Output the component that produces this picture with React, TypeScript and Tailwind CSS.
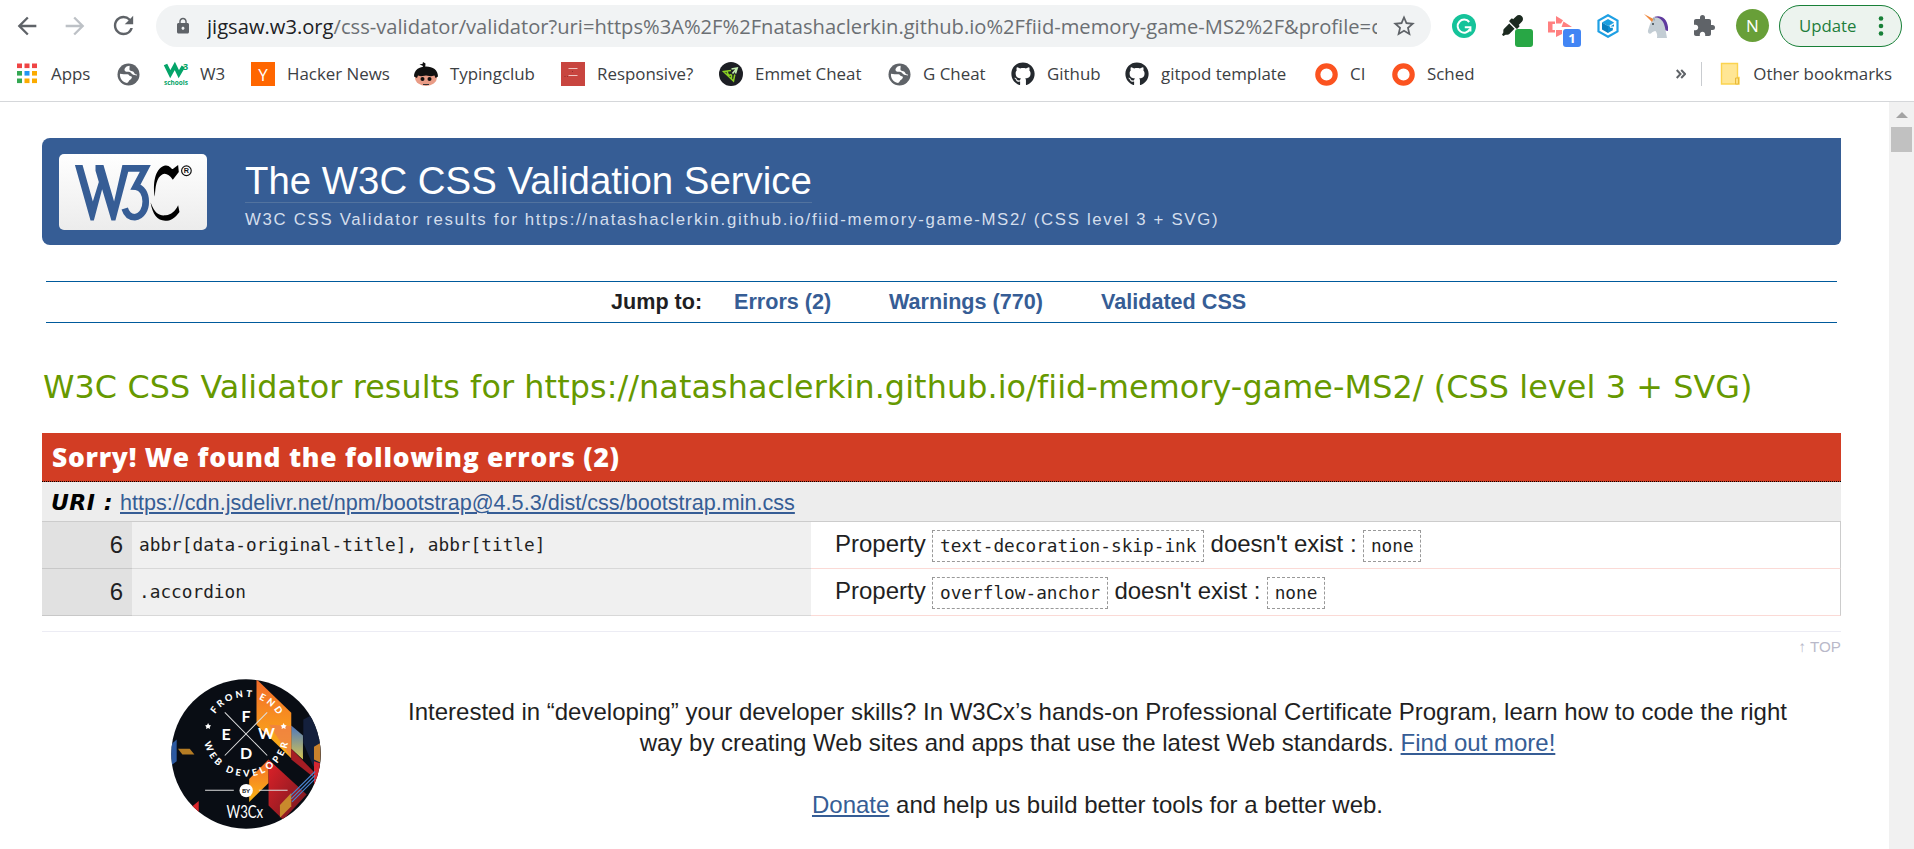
import type { ReactNode } from 'react';
import { FaEyeDropper, FaGithub } from 'react-icons/fa';
import { MdArrowBack, MdArrowForward, MdExtension, MdLock, MdRefresh, MdStarBorder } from 'react-icons/md';

function AppsIcon() {
  const colors = ['#ef4444', '#ef4444', '#ef4444', '#34a853', '#2196f3', '#fbab00', '#34a853', '#fbab00', '#fbab00'];
  return (
    <svg viewBox="0 0 24 24" className="size-6">
      {colors.map((c, i) => (
        <rect key={i} x={2 + (i % 3) * 7.5} y={1.5 + Math.floor(i / 3) * 7.5} width="5" height="4.6" fill={c} />
      ))}
    </svg>
  );
}

function GlobeIcon() {
  return (
    <svg viewBox="0 0 24 24" className="size-6">
      <circle cx="12.5" cy="12.5" r="11" fill="#5f6368" />
      <path d="M4 11.800C7 12.500 9 12 11.500 12.200 13 12.300 13 14 15 14.300 16.500 14.600 16 16.500 14.500 17.500 12.500 18.500 13 20 11 21 6 20 3.500 16 4 11.800Z" fill="#fff" />
      <path d="M13.500 3.800C10 4 9.500 5.500 8.500 7.200 8 9 10 10 12.500 9.800 14.500 9.800 15 11 16 12 17.500 13.300 19.500 13 21 13.500 21.300 9 18.500 4.500 13.500 3.800Z" fill="#fff" />
      <path d="M13.500 2.500C19 3 22.500 8 22.300 13 19.500 12.500 18.500 12 18 10.500 17.500 9 15.500 9.500 14 8.500 12.800 7.300 14 6.500 13.500 2.500Z" fill="#5f6368" />
    </svg>
  );
}

function SchoolsIcon() {
  return (
    <svg viewBox="0 0 24 24" className="size-6 overflow-visible">
      <path d="M1.5 2.5 6.3 12.2 10.8 4 14.8 12.2 19.3 4.5" fill="none" stroke="#04a469" strokeWidth="3.8" />
      <text x="19" y="7.5" fontSize="9" fontWeight="700" fill="#04a469" className="font-['Open_Sans']">3</text>
      <text x="0" y="23" fontSize="7" fontWeight="700" fill="#04a469" textLength="24" lengthAdjust="spacingAndGlyphs" className="font-['Open_Sans']">schools</text>
    </svg>
  );
}

function TypingIcon() {
  return (
    <svg viewBox="0 0 24 24" className="size-6">
      <path d="M8.500 6 9 4 5.500 2.200 8.500 2 9 0l2.500 1.500-.3 4Z" fill="#111" />
      <ellipse cx="12" cy="15.5" rx="11" ry="8.5" fill="#e99c86" />
      <path d="M0 14.500C0 8 5 4.500 12 4.500S24 8 24 14.500l-2.500 1.500-1-2.500-3.500.8-5-.8-5 .8-3-.8-1 2.500Z" fill="#111" />
      <circle cx="8.5" cy="17" r="2" fill="#111" />
      <circle cx="15.5" cy="17" r="2" fill="#111" />
      <path d="M9 22.5h6" stroke="#333" strokeWidth="1" />
    </svg>
  );
}

function ResponsiveIcon() {
  return (
    <svg viewBox="0 0 24 24" className="size-6">
      <rect width="24" height="24" fill="#c8453f" />
      <path d="M7.5 6.5h9M7.5 13.5h9" stroke="#f0c4c0" strokeWidth="1.2" />
      <path d="M3.5 14.5h1M6 14.5h.8M11 9.5h1" stroke="#8e2f2b" strokeWidth="1" />
    </svg>
  );
}

function EmmetIcon() {
  return (
    <svg viewBox="0 0 24 24" className="size-6">
      <circle cx="12" cy="12" r="12" fill="#1d1f24" />
      <path d="M12 8.5 4.5 9.5 14.5 19 15.8 12.5M8 9.2l1.5 4.3 3-1M12.5 12.5v4" fill="none" stroke="#8bd124" strokeWidth="1.5" />
      <path d="M12.5 7 18.2 6 16.5 11.5M17.5 6.8 13.5 11.5" fill="none" stroke="#c5efb0" strokeWidth="1.6" />
    </svg>
  );
}

function RingIcon() {
  return (
    <svg viewBox="0 0 24 24" className="size-6">
      <circle cx="12.5" cy="12.5" r="8.7" fill="none" stroke="#fb5320" strokeWidth="5.2" />
    </svg>
  );
}

function YIcon() {
  return (
    <span className="flex size-6 items-center justify-center bg-[#ff6600] font-['Open_Sans',sans-serif] text-[17px] leading-none text-white">Y</span>
  );
}

const bookmarks: { icon: ReactNode; label: string; width: string }[] = [
  { icon: <AppsIcon />, label: 'Apps', width: 'w-[101px]' },
  { icon: <GlobeIcon />, label: '', width: 'w-12' },
  { icon: <SchoolsIcon />, label: 'W3', width: 'w-[87px]' },
  { icon: <YIcon />, label: 'Hacker News', width: 'w-[163px]' },
  { icon: <TypingIcon />, label: 'Typingclub', width: 'w-[147px]' },
  { icon: <ResponsiveIcon />, label: 'Responsive?', width: 'w-[158px]' },
  { icon: <EmmetIcon />, label: 'Emmet Cheat', width: 'w-[168px]' },
  { icon: <GlobeIcon />, label: 'G Cheat', width: 'w-[124px]' },
  { icon: <FaGithub className="size-6 text-[#24292e]" />, label: 'Github', width: 'w-[114px]' },
  { icon: <FaGithub className="size-6 text-[#24292e]" />, label: 'gitpod template', width: 'w-[189px]' },
  { icon: <RingIcon />, label: 'CI', width: 'w-[77px]' },
  { icon: <RingIcon />, label: 'Sched', width: 'w-[100px]' },
];

function GrammarlyIcon() {
  return (
    <svg viewBox="0 0 24 24" className="size-6">
      <circle cx="12" cy="12" r="12" fill="#15c39a" />
      <path d="M17.2 8A6.5 6.5 0 1 0 18 15" fill="none" stroke="#fff" strokeWidth="2" />
      <path d="M12.8 13.3h5.6v4.2" fill="none" stroke="#fff" strokeWidth="2" />
    </svg>
  );
}

function HexIcon() {
  return (
    <svg viewBox="0 0 24 24" className="size-6">
      <path d="M12 1.2 21.5 6.6V17.4L12 22.8 2.5 17.4V6.6Z" fill="#fff" stroke="#1fa0e4" strokeWidth="2.2" />
      <path d="M12 5 18 8.500 12 12 6 8.500Z" fill="#1b9fe0" />
      <path d="M6 8.500 12 12V19L6 15.500Z" fill="#0a7fbf" />
      <path d="M12 12 18 8.500V15.500L12 19Z" fill="#0f8fd2" />
      <path d="M19 9 13.500 12.200M14 13.200h3.500v3" fill="none" stroke="#fff" strokeWidth="1.3" />
    </svg>
  );
}

function UnicornIcon() {
  return (
    <svg viewBox="0 0 24 24" className="size-6">
      <path d="M10 3C17 0 25 5 24 17l-4-1L15 6Z" fill="#5f3a9e" />
      <path d="M9 4.5C13 2 18 5 20 10c1.500 4 2 9 3 14H13c.5-3 0-5-1.500-7-1.500 0-3.500 1-4.500 2.500-2 .5-3.500-.5-3-3C5 13 6.500 8 9 4.500Z" fill="#c3cdd4" />
      <path d="M0 0 9.5 5 8 8Z" fill="#f0883c" />
      <path d="M9.5 3.5 10.5 6.5" stroke="#9aa7b0" strokeWidth="1.5" />
      <circle cx="9" cy="10" r="1" fill="#38444c" />
    </svg>
  );
}

function CaptureIcon() {
  return (
    <svg viewBox="0 0 24 24" className="size-6" fill="#ff8080">
      <path d="M0 5.500h7v2.500H4.500v6H7v2.500H0Z" />
      <path d="M8 0 15 4.200 13 7.500H8Z" />
      <path d="M15.500 5.500 24 11H13.500Z" />
      <path d="M8 14h6v4l-6 3Z" />
    </svg>
  );
}

function Toolbar() {
  return (
    <div className="flex h-[51px] items-start font-['Open_Sans','Segoe_UI',sans-serif]">
      <div className="flex w-[156px] shrink-0 items-center gap-[20px] pl-[13px] pt-[11px] text-[#5f6368]">
        <MdArrowBack className="size-7" />
        <MdArrowForward className="size-7 text-[#bdc1c6]" />
        <MdRefresh className="size-[29px]" />
      </div>
      <div className="mt-[5px] flex h-[42px] w-[1275px] shrink-0 items-center rounded-full bg-[#f1f3f4]">
        <MdLock className="ml-[18px] size-[18px] shrink-0 text-[#5f6368]" />
        <div className="ml-[15px] w-[1170px] overflow-hidden whitespace-nowrap text-[20.15px] leading-[38px] text-[#6b6f73]">
          <span className="text-[#202124]">jigsaw.w3.org</span>
          <span>/css-validator/validator?uri=https%3A%2F%2Fnatashaclerkin.github.io%2Ffiid-memory-game-MS2%2F&amp;profile=c</span>
        </div>
        <MdStarBorder className="ml-[14px] size-[26px] text-[#5f6368]" />
      </div>
      <div className="flex shrink-0 gap-6 pl-[21px] pt-[14px]">
        <GrammarlyIcon />
        <span className="relative size-6 pl-[2px] pt-px">
          <FaEyeDropper className="size-[21px] text-[#1c2a20]" />
          <span className="absolute left-[15px] top-[15px] size-[18px] rounded-[3px] bg-[#28a745]" />
        </span>
        <span className="relative size-6 pt-[2px]">
          <CaptureIcon />
          <span className="absolute left-[15px] top-[15px] flex size-[18px] items-center justify-center rounded-[3px] bg-[#4285f4] text-[13px] font-bold leading-none text-white">1</span>
        </span>
        <HexIcon />
        <UnicornIcon />
        <MdExtension className="size-6 text-[#5f6368]" />
      </div>
      <div className="ml-5 mt-[9px] flex size-[33px] shrink-0 items-center justify-center rounded-full bg-[#689f38] text-[17px] leading-none text-white">N</div>
      <div className="ml-[10px] mt-[5px] flex h-[42px] w-[123px] shrink-0 items-center rounded-full border border-[#188038] bg-[#ecf3ee] pl-[19px] text-[16.8px] text-[#1e7e3c]">
        <span className="-mt-px">Update</span>
        <svg viewBox="0 0 6 20" className="ml-[21px] h-5 w-[6px]" fill="#188038">
          <circle cx="3" cy="2.5" r="2.3" />
          <circle cx="3" cy="10" r="2.3" />
          <circle cx="3" cy="17.5" r="2.3" />
        </svg>
      </div>
    </div>
  );
}

function BookmarksBar() {
  return (
    <div className="flex h-[51px] items-start border-b border-[#d5d7da] pl-[15px] pt-[11px] font-['Open_Sans','Segoe_UI',sans-serif] text-[16.9px] text-[#3c4043]">
      {bookmarks.map((b, i) => (
        <div key={i} className={`flex h-6 shrink-0 items-center gap-3 ${b.width}`}>
          <span className="shrink-0">{b.icon}</span>
          <span className="-mt-px whitespace-nowrap">{b.label}</span>
        </div>
      ))}
      <div className="flex h-6 flex-1 items-center justify-end">
        <svg viewBox="0 0 10 10" className="mr-[15px] size-[10px]" fill="none" stroke="#5f6368" strokeWidth="2">
          <path d="M.7 1 4.500 5 .7 9M5.200 1 9 5 5.200 9" />
        </svg>
        <div className="h-6 w-px bg-[#c9ccd0]" />
        <svg viewBox="0 0 20 24" className="ml-[18px] h-6 w-5">
          <path d="M1.5 1.500h16v14h1.500v6.500h-17.500Z" fill="#ffe694" stroke="#fbd34f" strokeWidth="1.4" />
          <path d="M15.5 22v-6h3v6Z" fill="#ffe082" stroke="#e8b93a" strokeWidth="1" />
        </svg>
        <span className="-mt-px ml-[13px] mr-[22px] whitespace-nowrap">Other bookmarks</span>
      </div>
    </div>
  );
}

function W3CLogo() {
  return (
    <div className="ml-[17px] mt-4 h-[76px] w-[148px] shrink-0 rounded-[5px] bg-linear-to-b from-white to-[#ececec]">
      <svg viewBox="14 12 446 228" className="h-[76px] w-[148px]">
        <path d="M62 45H85L116 155 134 96 124 62V45H148L180 155 205 45H228L184 212H172L144 118 119 212H109Z" fill="#365d95" />
        <path d="M210 55H274L245 110C284 112 288 196 242 202Q220 202 212 176" fill="none" stroke="#365d95" strokeWidth="20" />
        <path d="M303 140C296 105 302 56 331 47 348 43 352 58 357 57L373 45 375 66 357 89C346 74 336 68 325 73 308 82 304 110 303 140Z" fill="#000" />
        <path d="M290 158C304 196 320 198 336 196 352 195 364 184 373 166L377 186C364 204 350 213 334 213 310 212 296 194 290 158Z" fill="#000" />
        <circle cx="398" cy="62" r="14.5" fill="none" stroke="#111" strokeWidth="3.5" />
        <text x="398" y="70" fontSize="22" fontWeight="700" textAnchor="middle" fill="#111">R</text>
      </svg>
    </div>
  );
}

function Code({ children }: { children: string }) {
  return (
    <code className="ml-[6.500px] mr-[6.300px] mt-2 h-8 border border-dashed border-[#999] px-[6.800px] font-['DejaVu_Sans_Mono',monospace] text-[17.75px] leading-[31px]">
      {children}
    </code>
  );
}

function ErrorRow({ line, selector, property }: { line: string; selector: string; property: string }) {
  return (
    <div className="flex h-[47px]">
      <div className="w-[90px] border-b border-[#c8c8c8] bg-[#e1e1e1] pr-[9px] text-right leading-[46px]">{line}</div>
      <div className="w-[679px] border-b border-[#d8d8d8] bg-[#f0f0f0] pl-[7px] font-['DejaVu_Sans_Mono',monospace] text-[17.78px] leading-[46px]">
        {selector}
      </div>
      <div className="flex flex-1 border-b border-r border-b-[#fbdad6] border-r-[#ccc] pl-6 leading-[44px]">
        <span>Property</span>
        <Code>{property}</Code>
        <span>doesn't exist :</span>
        <Code>none</Code>
      </div>
    </div>
  );
}

function CourseBadge() {
  return (
    <svg viewBox="64 60 449 447" className="ml-[129px] size-[150px] shrink-0" fill="#fff">
      <defs>
        <clipPath id="disc"><circle cx="288.5" cy="283.5" r="223.5" /></clipPath>
        <linearGradient id="amber" x1="0" x2="0" y1="0" y2="1"><stop offset="0" stopColor="#f36a2a" /><stop offset="1" stopColor="#fbb615" /></linearGradient>
        <linearGradient id="steel" x1="0" x2="0" y1="0" y2="1"><stop offset="0" stopColor="#4a76c0" /><stop offset="1" stopColor="#d8c750" /></linearGradient>
        <linearGradient id="crimson" x1="0" x2="1" y1="0" y2="1"><stop offset="0" stopColor="#e02128" /><stop offset="1" stopColor="#6d1820" /></linearGradient>
        <path id="upper" d="M179 223a110 110 0 0 1 220 0" />
        <path id="lower" d="M161 210V223a128 128 0 0 0 256 0V210" />
      </defs>
      <g clipPath="url(#disc)">
        <rect x="60" y="56" width="460" height="460" fill="#090d14" />
        <path d="M460 180 520 150V330L490 320 460 250Z" fill="#14203c" />
        <path d="M424 198 459 228V300L424 268Z" fill="url(#steel)" />
        <path d="M320 60 424 160V296L320 196Z" fill="url(#amber)" />
        <path d="M358 196 424 200V296Z" fill="#ee7d4c" opacity=".7" />
        <path d="M424 268 490 335V352L424 300Z" fill="#a51d24" />
        <path d="M298 358 356 300V370L298 427Z" fill="url(#amber)" />
        <path d="M356 300 470 405 400 480 356 438Z" fill="url(#crimson)" />
        <path d="M390 436 424 400V440L390 474Z" fill="#c98a2c" />
        <path d="M492 262 512 250V310L492 300Z" fill="#c9812c" />
        <path d="M492 305 512 312V360L492 380Z" fill="#d32731" />
        <path d="M422 408 495 336M424 418 495 347M426 427 495 358" stroke="#4a84cf" strokeWidth="3.5" />
        <path d="M64 255 81 240V305L64 318Z" fill="#2c59a0" />
        <path d="M85 268H120L134 285H98Z" fill="#b57c24" />
        <path d="M128 440 147 424V470L128 455Z" fill="#d9262c" />
      </g>
      <path d="M225 159 352 288M352 159 225 288" stroke="#ddd" strokeWidth="3" />
      <g className="font-['Lato',sans-serif]" fontWeight="700">
        <g fontSize="48" textAnchor="middle">
          <text x="289" y="188">F</text>
          <text x="229" y="241">E</text>
          <text x="350" y="240">W</text>
          <text x="289" y="299">D</text>
        </g>
        <g fontSize="28" fontWeight="900">
          <text textAnchor="middle" letterSpacing="8"><textPath href="#upper" startOffset="51.5%">FRONT END</textPath></text>
          <text textAnchor="middle" letterSpacing="9.5"><textPath href="#lower" startOffset="51%">WEB DEVELOPER</textPath></text>
        </g>
        <path d="M175 191 178 197 184 198 180 203 181 209 175 206 169 209 170 203 166 198 172 197ZM401 191 404 197 410 198 406 203 407 209 401 206 395 209 396 203 392 198 398 197Z" />
        <path d="M166 392H252M327 392H413" stroke="#ddd" strokeWidth="3" />
        <circle cx="289" cy="393" r="20" />
        <text x="289" y="400" fontSize="19" fill="#111" textAnchor="middle">BY</text>
        <text x="230" y="476" fontSize="54" fontWeight="400" textLength="110" lengthAdjust="spacingAndGlyphs">W3Cx</text>
      </g>
    </svg>
  );
}

function Page() {
  return (
    <main className="w-[1889px] shrink-0 overflow-hidden pl-[42px] pr-12 pt-9 font-['Liberation_Sans',Arial,sans-serif] text-[24px] text-[#1f1f23]">
      <header className="flex h-[107px] rounded-l-lg rounded-br-md bg-[#365d95] text-white">
        <W3CLogo />
        <div className="ml-[38px] pt-[22px]">
          <h1 className="w-max border-b border-[#52739f] text-[38.4px] leading-[42px]">The W3C CSS Validation Service</h1>
          <p className="text-[16.8px] leading-[34px] tracking-[1.69px] text-[#d4deec]">
            W3C CSS Validator results for https://natashaclerkin.github.io/fiid-memory-game-MS2/ (CSS level 3 + SVG)
          </p>
        </div>
      </header>
      <nav className="ml-1 mr-1 mt-9 flex h-[42px] border-y border-[#005a9c] pl-[565px] text-[21.6px] font-bold leading-10 text-[#365d95]">
        <span className="w-[123px] text-[#1f1f23]">Jump to:</span>
        <a className="w-[155px]">Errors (2)</a>
        <a className="w-[212px]">Warnings (770)</a>
        <a>Validated CSS</a>
      </nav>
      <h2 className="mt-[42px] whitespace-nowrap pl-px font-['DejaVu_Sans',Verdana,sans-serif] text-[31.8px] leading-[44px] tracking-[0.1px] text-[#690] [font-variant-ligatures:none]">
        W3C CSS Validator results for https://natashaclerkin.github.io/fiid-memory-game-MS2/ (CSS level 3 + SVG)
      </h2>
      <section className="mt-6">
        <h3 className="h-[49px] border-b border-dotted border-black bg-[#d23d24] pl-[10px] font-['Open_Sans',sans-serif] text-[26.4px] font-extrabold leading-[48px] tracking-[0.75px] text-white">
          Sorry! We found the following errors (2)
        </h3>
        <div className="flex h-10 border-b border-[#ccc] bg-[#ededed] pl-[9px] text-[21.6px] leading-[41px]">
          <strong className="w-[69px] font-['DejaVu_Sans',Verdana,sans-serif] text-[22px] italic tracking-[0.5px] text-black">URI :</strong>
          <a className="text-[#365d95] underline decoration-2 underline-offset-2">https://cdn.jsdelivr.net/npm/bootstrap@4.5.3/dist/css/bootstrap.min.css</a>
        </div>
        <ErrorRow line="6" selector="abbr[data-original-title], abbr[title]" property="text-decoration-skip-ink" />
        <ErrorRow line="6" selector=".accordion" property="overflow-anchor" />
      </section>
      <div className="mt-[15px] border-t border-[#ececf4] pt-[5px] text-right text-[15.2px] leading-5 text-[#b9b9c9]">↑ TOP</div>
      <div className="mt-[22px] flex">
        <CourseBadge />
        <div className="ml-[33px] flex-1 pt-[17px] text-center leading-[31.2px]">
          <p>
            Interested in “developing” your developer skills? In W3Cx’s hands-on Professional Certificate Program, learn how to code the right
            <br />
            way by creating Web sites and apps that use the latest Web standards.{' '}
            <a className="text-[#365d95] underline decoration-2 underline-offset-2">Find out more!</a>
          </p>
          <p className="mt-[31px]">
            <a className="text-[#365d95] underline decoration-2 underline-offset-2">Donate</a> and help us build better tools for a better web.
          </p>
        </div>
      </div>
    </main>
  );
}

export default function App() {
  return (
    <div className="flex h-[849px] w-[1914px] flex-col overflow-hidden bg-white">
      <Toolbar />
      <BookmarksBar />
      <div className="flex min-h-0 flex-1">
        <Page />
        <div className="flex w-[25px] flex-col items-center bg-[#f1f1f1] pt-[10px]">
          <svg viewBox="0 0 12 6" className="h-[6px] w-3" fill="#a3a3a3"><path d="M6 0 12 6H0Z" /></svg>
          <div className="mt-[9px] h-[25px] w-[21px] bg-[#c1c1c1]" />
        </div>
      </div>
    </div>
  );
}
